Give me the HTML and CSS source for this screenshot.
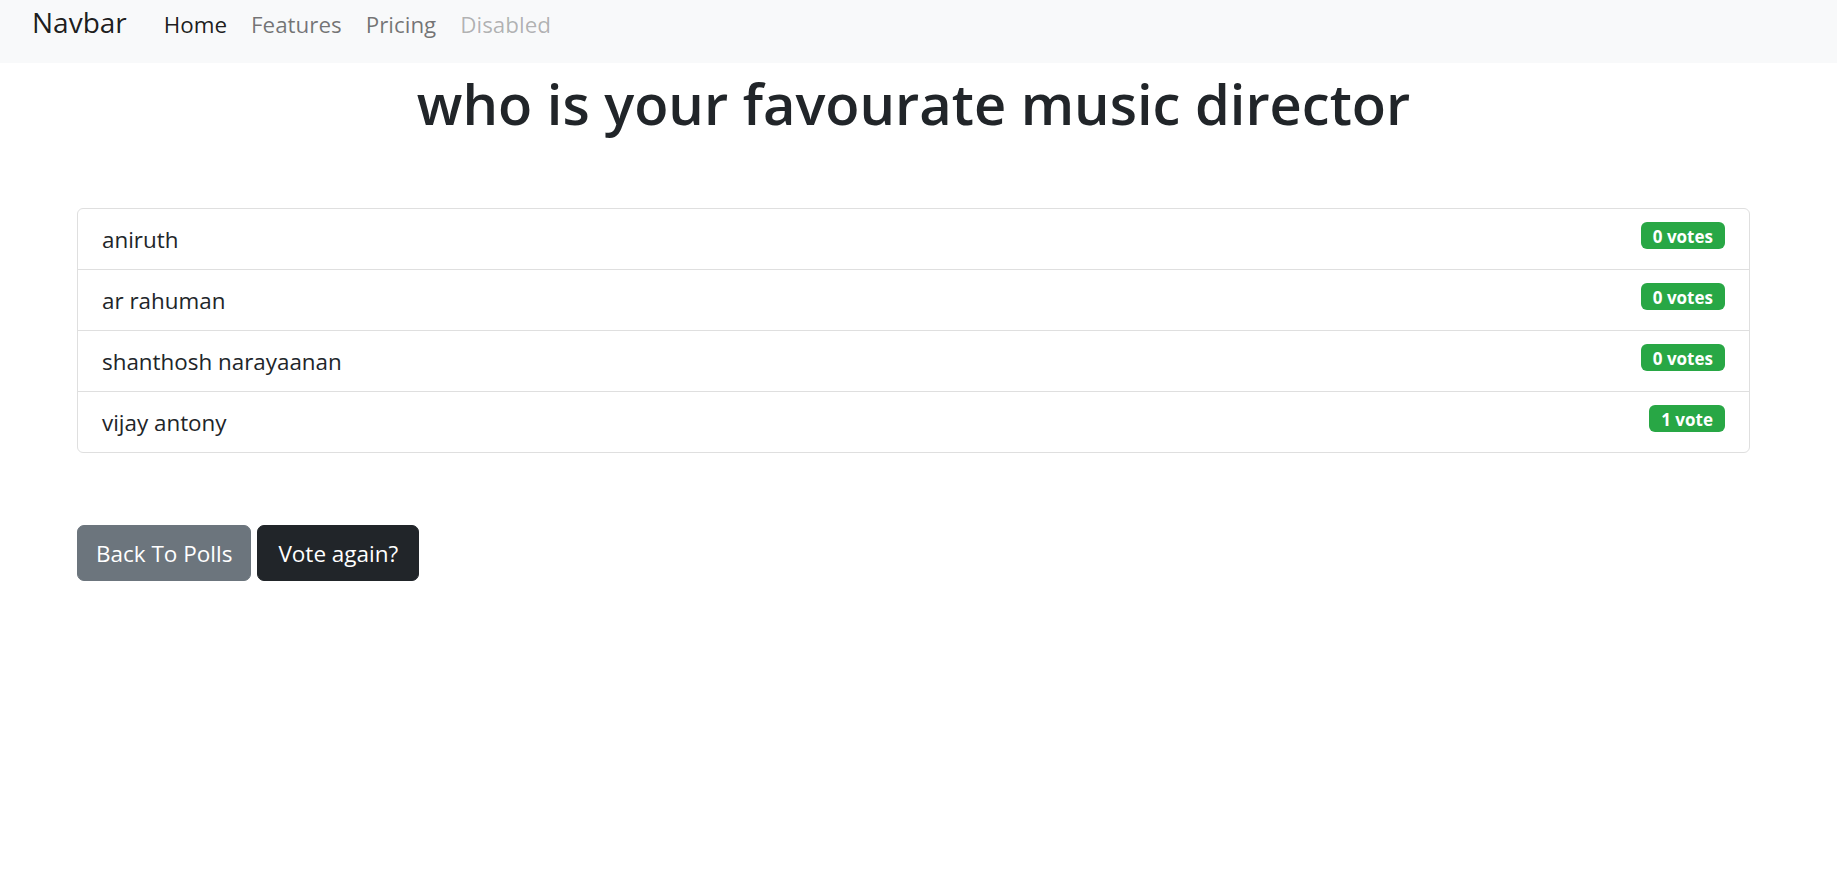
FILE: index.html
```html
<!DOCTYPE html>
<html lang="en">
<head>
<meta charset="utf-8">
<title>Poll results</title>
<link rel="stylesheet" href="styles.css">
</head>
<body>
<nav class="navbar">
  <a class="brand" href="#">Navbar</a>
  <ul class="nav-links">
    <li><a class="nav-link active" href="#">Home</a></li>
    <li><a class="nav-link" href="#">Features</a></li>
    <li><a class="nav-link" href="#">Pricing</a></li>
    <li><a class="nav-link disabled">Disabled</a></li>
  </ul>
</nav>
<main class="content">
  <h1 class="title">who is your favourate music director</h1>
  <ul class="list-group">
    <li class="list-item"><span>aniruth</span><span class="badge">0 votes</span></li>
    <li class="list-item"><span>ar rahuman</span><span class="badge">0 votes</span></li>
    <li class="list-item"><span>shanthosh narayaanan</span><span class="badge">0 votes</span></li>
    <li class="list-item"><span>vijay antony</span><span class="badge">1 vote</span></li>
  </ul>
  <div class="actions">
    <button class="btn btn-secondary" type="button">Back To Polls</button>
    <button class="btn btn-dark" type="button">Vote again?</button>
  </div>
</main>
</body>
</html>
```

FILE: styles.css
```css
* {
  box-sizing: border-box;
}

body {
  margin: 0;
  font-family: "Segoe UI", "Open Sans", "Noto Sans", sans-serif;
  font-size: 22.4px;
  color: #212529;
  background: #ffffff;
}

a {
  text-decoration: none;
}

.navbar {
  display: flex;
  align-items: baseline;
  height: 63px;
  padding: 4px 0 0 32px;
  background: #f8f9fa;
}

.brand {
  font-size: 28px;
  line-height: 36px;
  color: rgba(0, 0, 0, 0.9);
  margin-right: 25px;
}

.nav-links {
  display: flex;
  list-style: none;
  margin: 0;
  padding: 0;
}

.nav-link {
  display: block;
  padding: 0 12px;
  font-size: 22.4px;
  line-height: 36px;
  color: rgba(0, 0, 0, 0.55);
}

.nav-link.active {
  color: rgba(0, 0, 0, 0.9);
}

.nav-link.disabled {
  color: rgba(0, 0, 0, 0.3);
}

.content {
  padding: 0 87px 0 77px;
}

.title {
  margin: 7px 0 0;
  text-align: center;
  font-size: 56px;
  line-height: 1.2;
  font-weight: 600;
  color: #212529;
}

.list-group {
  list-style: none;
  margin: 71px 0 0;
  padding: 0;
  border: 1px solid #dfdfdf;
  border-radius: 6px;
}

.list-item {
  display: flex;
  justify-content: space-between;
  align-items: flex-start;
  padding: 13px 24px 11px;
  line-height: 36px;
}

.list-item + .list-item {
  border-top: 1px solid #dfdfdf;
}

.badge {
  display: inline-block;
  padding: 6px 12px 4px;
  font-size: 17px;
  line-height: 17px;
  font-weight: 700;
  color: #ffffff;
  background: #28a745;
  border-radius: 6px;
}

.actions {
  display: flex;
  gap: 6px;
  margin-top: 72px;
}

.btn {
  padding: 10px 18px 8px;
  font-family: inherit;
  font-size: 22.5px;
  line-height: 36px;
  border: 1px solid transparent;
  border-radius: 7px;
  color: #ffffff;
  cursor: pointer;
}

.btn-secondary {
  background: #6c757d;
  border-color: #6c757d;
}

.btn-dark {
  padding: 10px 20px 8px;
  background: #212529;
  border-color: #212529;
}
```
